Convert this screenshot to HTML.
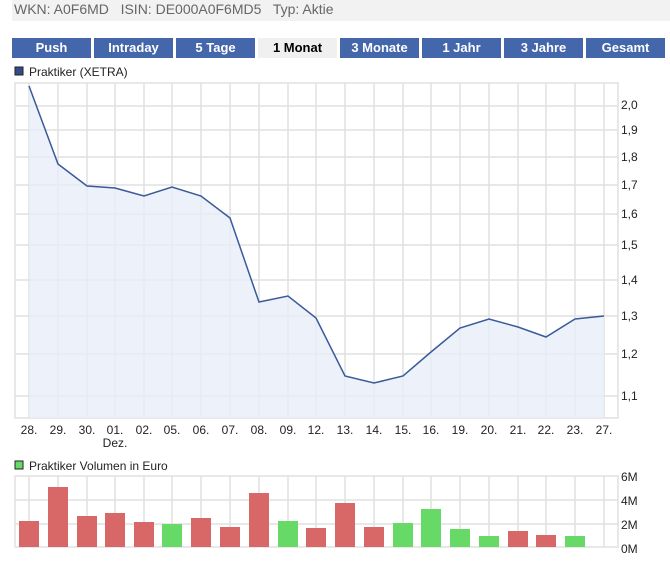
<!DOCTYPE html>
<html><head><meta charset="utf-8"><style>
body{margin:0;width:670px;height:565px;background:#fff;font-family:"Liberation Sans",sans-serif;position:relative;overflow:hidden}
.hdr{position:absolute;left:12px;top:0;width:658px;height:21px;background:#f2f2f2;color:#666;font-size:14px;line-height:19px;padding-left:2px;box-sizing:border-box}
.tab{position:absolute;top:38px;height:20px;width:79px;background:#4466aa;color:#fff;font-weight:bold;font-size:13px;text-align:center;line-height:20px}
.tab.on{background:#f0f0f0;color:#000}
</style></head><body>
<div class="hdr">WKN: A0F6MD&nbsp;&nbsp; ISIN: DE000A0F6MD5&nbsp;&nbsp; Typ: Aktie</div>
<div class="tab" style="left:12px">Push</div>
<div class="tab" style="left:94px">Intraday</div>
<div class="tab" style="left:176px">5 Tage</div>
<div class="tab on" style="left:258px">1 Monat</div>
<div class="tab" style="left:340px">3 Monate</div>
<div class="tab" style="left:422px">1 Jahr</div>
<div class="tab" style="left:504px">3 Jahre</div>
<div class="tab" style="left:586px">Gesamt</div>
<svg width="670" height="565" style="position:absolute;left:0;top:0" font-family="Liberation Sans, sans-serif">
<rect x="15" y="67" width="8" height="8" fill="#334c88" stroke="#222" stroke-width="1"/>
<text x="29" y="76" font-size="12" fill="#222">Praktiker (XETRA)</text>
<g stroke="#e0e0e0" stroke-width="1.5" fill="none">
<rect x="15" y="83" width="603" height="335"/>
<path d="M29 83V418M58 83V418M87 83V418M115 83V418M144 83V418M172 83V418M201 83V418M230 83V418M259 83V418M288 83V418M316 83V418M345 83V418M374 83V418M403 83V418M431 83V418M460 83V418M489 83V418M518 83V418M546 83V418M575 83V418M604 83V418"/>
<path d="M15 106H618M15 130H618M15 157H618M15 185H618M15 214H618M15 245H618M15 280H618M15 316H618M15 354H618M15 396H618"/>
</g>
<path d="M29 86L58 164L87 186L115 188L144 196L172 187L201 196L230 218L259 302L288 296L316 318L345 376L374 383L403 376L431 352L460 328L489 319L518 327L546 337L575 319L604 316V418H29Z" fill="#e8edf8" fill-opacity="0.8"/>
<polyline points="29,86 58,164 87,186 115,188 144,196 172,187 201,196 230,218 259,302 288,296 316,318 345,376 374,383 403,376 431,352 460,328 489,319 518,327 546,337 575,319 604,316" fill="none" stroke="#3a5a9a" stroke-width="1.5"/>
<g font-size="12" fill="#222">
<text x="621" y="109">2,0</text><text x="621" y="134">1,9</text><text x="621" y="161">1,8</text><text x="621" y="189">1,7</text><text x="621" y="218">1,6</text><text x="621" y="249">1,5</text><text x="621" y="284">1,4</text><text x="621" y="320">1,3</text><text x="621" y="358">1,2</text><text x="621" y="400">1,1</text>
</g>
<g font-size="12" fill="#222" text-anchor="middle">
<text x="29" y="434">28.</text><text x="58" y="434">29.</text><text x="87" y="434">30.</text><text x="115" y="434">01.</text><text x="144" y="434">02.</text><text x="172" y="434">05.</text><text x="201" y="434">06.</text><text x="230" y="434">07.</text><text x="259" y="434">08.</text><text x="288" y="434">09.</text><text x="316" y="434">12.</text><text x="345" y="434">13.</text><text x="374" y="434">14.</text><text x="403" y="434">15.</text><text x="431" y="434">16.</text><text x="460" y="434">19.</text><text x="489" y="434">20.</text><text x="518" y="434">21.</text><text x="546" y="434">22.</text><text x="575" y="434">23.</text><text x="604" y="434">27.</text>
<text x="115" y="447">Dez.</text>
</g>
<rect x="15" y="461" width="8" height="8" fill="#66d966" stroke="#222" stroke-width="1"/>
<text x="29" y="470" font-size="12" fill="#222">Praktiker Volumen in Euro</text>
<g stroke="#e0e0e0" stroke-width="1.5" fill="none">
<rect x="15" y="476" width="603" height="71"/>
<path d="M29 476V547M58 476V547M87 476V547M115 476V547M144 476V547M172 476V547M201 476V547M230 476V547M259 476V547M288 476V547M316 476V547M345 476V547M374 476V547M403 476V547M431 476V547M460 476V547M489 476V547M518 476V547M546 476V547M575 476V547M604 476V547"/>
<path d="M15 500H618M15 524H618"/>
</g>
<g fill="#d86868">
<rect x="19" y="521" width="20" height="26"/><rect x="48" y="487" width="20" height="60"/><rect x="77" y="516" width="20" height="31"/><rect x="105" y="513" width="20" height="34"/><rect x="134" y="522" width="20" height="25"/><rect x="191" y="518" width="20" height="29"/><rect x="220" y="527" width="20" height="20"/><rect x="249" y="493" width="20" height="54"/><rect x="306" y="528" width="20" height="19"/><rect x="335" y="503" width="20" height="44"/><rect x="364" y="527" width="20" height="20"/><rect x="508" y="531" width="20" height="16"/><rect x="536" y="535" width="20" height="12"/>
</g>
<g fill="#66d966">
<rect x="162" y="524" width="20" height="23"/><rect x="278" y="521" width="20" height="26"/><rect x="393" y="523" width="20" height="24"/><rect x="421" y="509" width="20" height="38"/><rect x="450" y="529" width="20" height="18"/><rect x="479" y="536" width="20" height="11"/><rect x="565" y="536" width="20" height="11"/>
</g>
<g font-size="12" fill="#222">
<text x="621" y="481">6M</text><text x="621" y="505">4M</text><text x="621" y="529">2M</text><text x="621" y="553">0M</text>
</g>
</svg>
</body></html>
